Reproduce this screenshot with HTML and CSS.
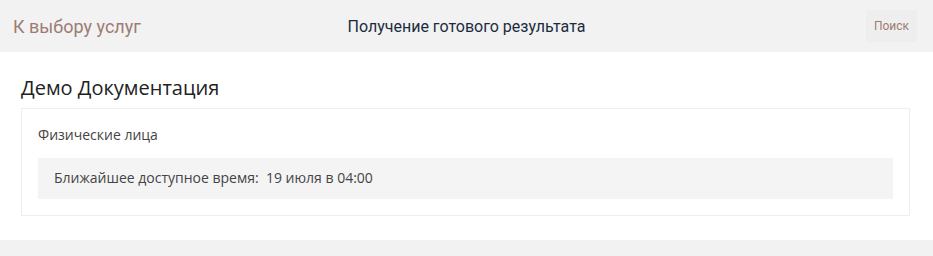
FILE: index.html
```html
<html>
    <head>
        <meta name="viewport" content="width=device-width, initial-scale=1.0">
        <title>Получение готового результата</title>
        <link rel="stylesheet" href="styles.css">
    </head>
    <body>
        <div class="topbar">
            <a class="back" href="#">К выбору услуг</a>
            <span class="title">Получение готового результата</span>
            <div class="actions"><button class="search">Поиск</button></div>
        </div>
        <div class="content">
            <h1>Демо Документация</h1>
            <div class="card">
                <p class="group">Физические лица</p>
                <div class="slot">Ближайшее доступное время: &nbsp;19 июля в 04:00</div>
            </div>
        </div>
        <div class="footer"></div>
    </body>
</html>
```

FILE: styles.css
```css
body {
    margin: 0;
    font-family: "Open Sans", sans-serif;
    background: #fff;
}
.topbar {
    height: 52px;
    background: #f2f2f2;
    display: grid;
    grid-template-columns: 1fr auto 1fr;
    align-items: center;
    padding: 0 13px;
    font-family: Roboto, sans-serif;
}
.back {
    color: #9e7b72;
    font-size: 18px;
    text-decoration: none;
}
.title {
    color: #1b2c40;
    font-size: 16px;
}
.actions {
    text-align: right;
}
.search {
    font-family: Roboto, sans-serif;
    font-size: 12px;
    color: #9e7b72;
    background: #eeeeee;
    border: none;
    padding: 9px 8px;
    margin-right: 3px;
}
.content {
    padding: 22px 23px 24px 21px;
}
h1 {
    margin: 0 0 7px;
    font-size: 20px;
    font-weight: normal;
    color: #222;
}
.card {
    border: 1px solid #eee;
    padding: 16px;
}
.group {
    margin: 0 0 14px;
    font-size: 14px;
    line-height: 19px;
    color: #444;
}
.slot {
    background: #f4f4f4;
    padding: 10px 16px 11px;
    font-size: 14px;
    line-height: 20px;
    color: #444;
}
.footer {
    height: 16px;
    background: #f2f2f2;
}
```
